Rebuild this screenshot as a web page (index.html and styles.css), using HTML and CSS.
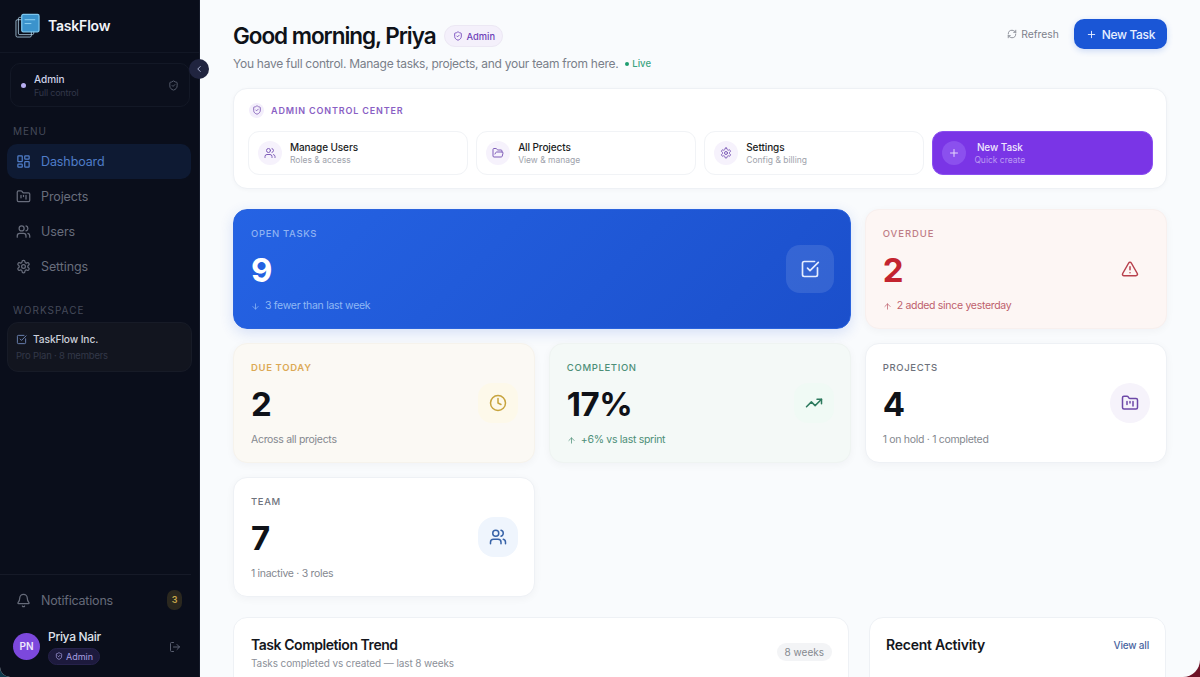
FILE: index.html
```html
<!DOCTYPE html>
<html lang="en">
<head>
  <meta charset="UTF-8" />
  <meta name="viewport" content="width=device-width, initial-scale=1.0"/>
  <title>TaskFlow Dashboard</title>
  <link rel="stylesheet" href="styles.css">
</head>
<body>
  <div class="app">
    <aside class="sidebar">
      <div class="brand">
        <svg class="logo" viewBox="0 0 26 26" fill="none" stroke="#b9dcf2" stroke-width="0.8">
          <rect x="1" y="7" width="16" height="18" rx="1.5"/>
          <rect x="3.5" y="4.5" width="16" height="18" rx="1.5"/>
          <rect x="7" y="1.5" width="18" height="18" rx="1.5" fill="#3b93cc" stroke="#7cc6ee" stroke-width="1.3"/>
          <path d="M10 7h11M10 11h7" stroke="#8fd3f5" stroke-width="1"/>
        </svg>
        <span>TaskFlow</span>
      </div>
      <button class="collapse">
        <svg viewBox="0 0 24 24" fill="none" stroke="#aab2d0" stroke-width="2.4" stroke-linecap="round" stroke-linejoin="round"><path d="m15 18-6-6 6-6"/></svg>
      </button>

      <div class="role-card">
        <i class="role-dot"></i>
        <div class="role-text">
          <strong>Admin</strong>
          <small>Full control</small>
        </div>
        <svg class="ico-sm" viewBox="0 0 24 24" fill="none" stroke="#5b6172" stroke-width="2" stroke-linecap="round" stroke-linejoin="round"><path d="M20 13c0 5-3.5 7.5-7.66 8.95a1 1 0 0 1-.67-.01C7.5 20.5 4 18 4 13V6a1 1 0 0 1 1-1c2 0 4.5-1.2 6.24-2.72a1.17 1.17 0 0 1 1.52 0C14.51 3.81 17 5 19 5a1 1 0 0 1 1 1z"/><path d="m9 12 2 2 4-4"/></svg>
      </div>

      <div class="side-label">MENU</div>
      <nav class="nav">
        <a class="nav-item active">
          <svg viewBox="0 0 24 24" fill="none" stroke="currentColor" stroke-width="2" stroke-linecap="round" stroke-linejoin="round"><rect x="3" y="3" width="7" height="9" rx="1"/><rect x="14" y="3" width="7" height="5" rx="1"/><rect x="14" y="12" width="7" height="9" rx="1"/><rect x="3" y="16" width="7" height="5" rx="1"/></svg>
          Dashboard
        </a>
        <a class="nav-item">
          <svg viewBox="0 0 24 24" fill="none" stroke="currentColor" stroke-width="2" stroke-linecap="round" stroke-linejoin="round"><path d="M20 20a2 2 0 0 0 2-2V8a2 2 0 0 0-2-2h-7.9a2 2 0 0 1-1.69-.9L9.6 3.9A2 2 0 0 0 7.93 3H4a2 2 0 0 0-2 2v13a2 2 0 0 0 2 2Z"/><path d="M8 10v4M12 10v2M16 10v6"/></svg>
          Projects
        </a>
        <a class="nav-item">
          <svg viewBox="0 0 24 24" fill="none" stroke="currentColor" stroke-width="2" stroke-linecap="round" stroke-linejoin="round"><path d="M16 21v-2a4 4 0 0 0-4-4H6a4 4 0 0 0-4 4v2"/><circle cx="9" cy="7" r="4"/><path d="M22 21v-2a4 4 0 0 0-3-3.87"/><path d="M16 3.13a4 4 0 0 1 0 7.75"/></svg>
          Users
        </a>
        <a class="nav-item">
          <svg viewBox="0 0 24 24" fill="none" stroke="currentColor" stroke-width="2" stroke-linecap="round" stroke-linejoin="round"><path d="M12.22 2h-.44a2 2 0 0 0-2 2v.18a2 2 0 0 1-1 1.73l-.43.25a2 2 0 0 1-2 0l-.15-.08a2 2 0 0 0-2.73.73l-.22.38a2 2 0 0 0 .73 2.73l.15.1a2 2 0 0 1 1 1.72v.51a2 2 0 0 1-1 1.74l-.15.09a2 2 0 0 0-.73 2.73l.22.38a2 2 0 0 0 2.73.73l.15-.08a2 2 0 0 1 2 0l.43.25a2 2 0 0 1 1 1.73V20a2 2 0 0 0 2 2h.44a2 2 0 0 0 2-2v-.18a2 2 0 0 1 1-1.73l.43-.25a2 2 0 0 1 2 0l.15.08a2 2 0 0 0 2.73-.73l.22-.39a2 2 0 0 0-.73-2.73l-.15-.08a2 2 0 0 1-1-1.74v-.5a2 2 0 0 1 1-1.74l.15-.09a2 2 0 0 0 .73-2.73l-.22-.38a2 2 0 0 0-2.73-.73l-.15.08a2 2 0 0 1-2 0l-.43-.25a2 2 0 0 1-1-1.73V4a2 2 0 0 0-2-2z"/><circle cx="12" cy="12" r="3"/></svg>
          Settings
        </a>
      </nav>

      <div class="side-label side-label-2">WORKSPACE</div>
      <div class="workspace">
        <div class="workspace-name">
          <svg class="ico-sm" viewBox="0 0 24 24" fill="none" stroke="#6f87b8" stroke-width="2" stroke-linecap="round" stroke-linejoin="round"><path d="M21 10.5V19a2 2 0 0 1-2 2H5a2 2 0 0 1-2-2V5a2 2 0 0 1 2-2h12.5"/><path d="m9 11 3 3L22 4"/></svg>
          TaskFlow Inc.
        </div>
        <small>Pro Plan · 8 members</small>
      </div>

      <div class="side-footer">
        <div class="notif">
          <svg viewBox="0 0 24 24" fill="none" stroke="currentColor" stroke-width="2" stroke-linecap="round" stroke-linejoin="round"><path d="M10.27 21a2 2 0 0 0 3.46 0"/><path d="M3.26 15.33A1 1 0 0 0 4 17h16a1 1 0 0 0 .74-1.67C19.41 13.96 18 12.5 18 8A6 6 0 0 0 6 8c0 4.5-1.41 5.96-2.74 7.33"/></svg>
          <span>Notifications</span>
          <b class="notif-badge">3</b>
        </div>
        <div class="user">
          <div class="avatar">PN</div>
          <div class="user-text">
            <strong>Priya Nair</strong>
            <span class="user-role">
              <svg viewBox="0 0 24 24" fill="none" stroke="currentColor" stroke-width="2.2" stroke-linecap="round" stroke-linejoin="round"><path d="M20 13c0 5-3.5 7.5-7.66 8.95a1 1 0 0 1-.67-.01C7.5 20.5 4 18 4 13V6a1 1 0 0 1 1-1c2 0 4.5-1.2 6.24-2.72a1.17 1.17 0 0 1 1.52 0C14.51 3.81 17 5 19 5a1 1 0 0 1 1 1z"/><path d="m9 12 2 2 4-4"/></svg>
              Admin
            </span>
          </div>
          <svg class="logout" viewBox="0 0 24 24" fill="none" stroke="#5b6172" stroke-width="2" stroke-linecap="round" stroke-linejoin="round"><path d="M9 21H5a2 2 0 0 1-2-2V5a2 2 0 0 1 2-2h4"/><path d="m16 17 5-5-5-5"/><path d="M21 12H9"/></svg>
        </div>
      </div>
    </aside>

    <main class="main">
      <header class="top">
        <div>
          <div class="title-row">
            <h1>Good morning, Priya</h1>
            <span class="admin-pill">
              <svg viewBox="0 0 24 24" fill="none" stroke="currentColor" stroke-width="2" stroke-linecap="round" stroke-linejoin="round"><path d="M20 13c0 5-3.5 7.5-7.66 8.95a1 1 0 0 1-.67-.01C7.5 20.5 4 18 4 13V6a1 1 0 0 1 1-1c2 0 4.5-1.2 6.24-2.72a1.17 1.17 0 0 1 1.52 0C14.51 3.81 17 5 19 5a1 1 0 0 1 1 1z"/><path d="m9 12 2 2 4-4"/></svg>
              Admin
            </span>
          </div>
          <p class="subtitle">You have full control. Manage tasks, projects, and your team from here.<span class="live"><i></i>Live</span></p>
        </div>
        <div class="top-actions">
          <button class="refresh">
            <svg viewBox="0 0 24 24" fill="none" stroke="currentColor" stroke-width="2" stroke-linecap="round" stroke-linejoin="round"><path d="M3 12a9 9 0 0 1 9-9 9.75 9.75 0 0 1 6.74 2.74L21 8"/><path d="M21 3v5h-5"/><path d="M21 12a9 9 0 0 1-9 9 9.75 9.75 0 0 1-6.74-2.74L3 16"/><path d="M8 16H3v5"/></svg>
            Refresh
          </button>
          <button class="new-task">
            <svg viewBox="0 0 24 24" fill="none" stroke="currentColor" stroke-width="2" stroke-linecap="round"><path d="M5 12h14M12 5v14"/></svg>
            New Task
          </button>
        </div>
      </header>

      <section class="control">
        <div class="control-head">
          <span class="control-badge">
            <svg viewBox="0 0 24 24" fill="none" stroke="currentColor" stroke-width="2" stroke-linecap="round" stroke-linejoin="round"><path d="M20 13c0 5-3.5 7.5-7.66 8.95a1 1 0 0 1-.67-.01C7.5 20.5 4 18 4 13V6a1 1 0 0 1 1-1c2 0 4.5-1.2 6.24-2.72a1.17 1.17 0 0 1 1.52 0C14.51 3.81 17 5 19 5a1 1 0 0 1 1 1z"/><path d="m9 12 2 2 4-4"/></svg>
          </span>
          ADMIN CONTROL CENTER
        </div>
        <div class="control-grid">
          <a class="action">
            <span class="action-ico"><svg viewBox="0 0 24 24" fill="none" stroke="currentColor" stroke-width="2" stroke-linecap="round" stroke-linejoin="round"><path d="M16 21v-2a4 4 0 0 0-4-4H6a4 4 0 0 0-4 4v2"/><circle cx="9" cy="7" r="4"/><path d="M22 21v-2a4 4 0 0 0-3-3.87"/><path d="M16 3.13a4 4 0 0 1 0 7.75"/></svg></span>
            <span class="action-text"><b>Manage Users</b><small>Roles &amp; access</small></span>
          </a>
          <a class="action">
            <span class="action-ico"><svg viewBox="0 0 24 24" fill="none" stroke="currentColor" stroke-width="2" stroke-linecap="round" stroke-linejoin="round"><path d="m6 14 1.5-2.9A2 2 0 0 1 9.24 10H20a2 2 0 0 1 1.94 2.5l-1.54 6a2 2 0 0 1-1.95 1.5H4a2 2 0 0 1-2-2V5a2 2 0 0 1 2-2h3.9a2 2 0 0 1 1.69.9l.81 1.2a2 2 0 0 0 1.67.9H18a2 2 0 0 1 2 2v2"/></svg></span>
            <span class="action-text"><b>All Projects</b><small>View &amp; manage</small></span>
          </a>
          <a class="action">
            <span class="action-ico"><svg viewBox="0 0 24 24" fill="none" stroke="currentColor" stroke-width="2" stroke-linecap="round" stroke-linejoin="round"><path d="M12.22 2h-.44a2 2 0 0 0-2 2v.18a2 2 0 0 1-1 1.73l-.43.25a2 2 0 0 1-2 0l-.15-.08a2 2 0 0 0-2.73.73l-.22.38a2 2 0 0 0 .73 2.73l.15.1a2 2 0 0 1 1 1.72v.51a2 2 0 0 1-1 1.74l-.15.09a2 2 0 0 0-.73 2.73l.22.38a2 2 0 0 0 2.73.73l.15-.08a2 2 0 0 1 2 0l.43.25a2 2 0 0 1 1 1.73V20a2 2 0 0 0 2 2h.44a2 2 0 0 0 2-2v-.18a2 2 0 0 1 1-1.73l.43-.25a2 2 0 0 1 2 0l.15.08a2 2 0 0 0 2.73-.73l.22-.39a2 2 0 0 0-.73-2.73l-.15-.08a2 2 0 0 1-1-1.74v-.5a2 2 0 0 1 1-1.74l.15-.09a2 2 0 0 0 .73-2.73l-.22-.38a2 2 0 0 0-2.73-.73l-.15.08a2 2 0 0 1-2 0l-.43-.25a2 2 0 0 1-1-1.73V4a2 2 0 0 0-2-2z"/><circle cx="12" cy="12" r="3"/></svg></span>
            <span class="action-text"><b>Settings</b><small>Config &amp; billing</small></span>
          </a>
          <a class="action action-primary">
            <span class="action-ico"><svg viewBox="0 0 24 24" fill="none" stroke="currentColor" stroke-width="2" stroke-linecap="round"><path d="M5 12h14M12 5v14"/></svg></span>
            <span class="action-text"><b>New Task</b><small>Quick create</small></span>
          </a>
        </div>
      </section>

      <section class="stats">
        <div class="stat stat-blue">
          <div class="stat-body">
            <div class="stat-label">OPEN TASKS</div>
            <div class="stat-num">9</div>
            <div class="stat-sub"><svg viewBox="0 0 24 24" fill="none" stroke="currentColor" stroke-width="2" stroke-linecap="round" stroke-linejoin="round"><path d="M12 5v14M19 12l-7 7-7-7"/></svg>3 fewer than last week</div>
          </div>
          <span class="stat-ico"><svg viewBox="0 0 24 24" fill="none" stroke="currentColor" stroke-width="2" stroke-linecap="round" stroke-linejoin="round"><path d="M21 10.5V19a2 2 0 0 1-2 2H5a2 2 0 0 1-2-2V5a2 2 0 0 1 2-2h12.5"/><path d="m9 11 3 3L22 4"/></svg></span>
        </div>
        <div class="stat stat-red">
          <div class="stat-body">
            <div class="stat-label">OVERDUE</div>
            <div class="stat-num">2</div>
            <div class="stat-sub"><svg viewBox="0 0 24 24" fill="none" stroke="currentColor" stroke-width="2" stroke-linecap="round" stroke-linejoin="round"><path d="M12 19V5M5 12l7-7 7 7"/></svg>2 added since yesterday</div>
          </div>
          <span class="stat-ico"><svg viewBox="0 0 24 24" fill="none" stroke="currentColor" stroke-width="2" stroke-linecap="round" stroke-linejoin="round"><path d="m21.73 18-8-14a2 2 0 0 0-3.48 0l-8 14A2 2 0 0 0 4 21h16a2 2 0 0 0 1.73-3"/><path d="M12 9v4M12 17h.01"/></svg></span>
        </div>
        <div class="stat stat-amber">
          <div class="stat-body">
            <div class="stat-label">DUE TODAY</div>
            <div class="stat-num">2</div>
            <div class="stat-sub">Across all projects</div>
          </div>
          <span class="stat-ico"><svg viewBox="0 0 24 24" fill="none" stroke="currentColor" stroke-width="2" stroke-linecap="round" stroke-linejoin="round"><circle cx="12" cy="12" r="10"/><path d="M12 6v6l4 2"/></svg></span>
        </div>
        <div class="stat stat-green">
          <div class="stat-body">
            <div class="stat-label">COMPLETION</div>
            <div class="stat-num">17%</div>
            <div class="stat-sub"><svg viewBox="0 0 24 24" fill="none" stroke="currentColor" stroke-width="2" stroke-linecap="round" stroke-linejoin="round"><path d="M12 19V5M5 12l7-7 7 7"/></svg>+6% vs last sprint</div>
          </div>
          <span class="stat-ico"><svg viewBox="0 0 24 24" fill="none" stroke="currentColor" stroke-width="2" stroke-linecap="round" stroke-linejoin="round"><path d="M16 7h6v6"/><path d="m22 7-8.5 8.5-5-5L2 17"/></svg></span>
        </div>
        <div class="stat stat-plain">
          <div class="stat-body">
            <div class="stat-label">PROJECTS</div>
            <div class="stat-num">4</div>
            <div class="stat-sub">1 on hold · 1 completed</div>
          </div>
          <span class="stat-ico ico-violet"><svg viewBox="0 0 24 24" fill="none" stroke="currentColor" stroke-width="2" stroke-linecap="round" stroke-linejoin="round"><path d="M20 20a2 2 0 0 0 2-2V8a2 2 0 0 0-2-2h-7.9a2 2 0 0 1-1.69-.9L9.6 3.9A2 2 0 0 0 7.93 3H4a2 2 0 0 0-2 2v13a2 2 0 0 0 2 2Z"/><path d="M8 10v4M12 10v2M16 10v6"/></svg></span>
        </div>
        <div class="stat stat-plain">
          <div class="stat-body">
            <div class="stat-label">TEAM</div>
            <div class="stat-num">7</div>
            <div class="stat-sub">1 inactive · 3 roles</div>
          </div>
          <span class="stat-ico ico-blue"><svg viewBox="0 0 24 24" fill="none" stroke="currentColor" stroke-width="2" stroke-linecap="round" stroke-linejoin="round"><path d="M16 21v-2a4 4 0 0 0-4-4H6a4 4 0 0 0-4 4v2"/><circle cx="9" cy="7" r="4"/><path d="M22 21v-2a4 4 0 0 0-3-3.87"/><path d="M16 3.13a4 4 0 0 1 0 7.75"/></svg></span>
        </div>
      </section>

      <section class="panels">
        <div class="panel">
          <div>
            <h3>Task Completion Trend</h3>
            <p>Tasks completed vs created — last 8 weeks</p>
          </div>
          <span class="weeks">8 weeks</span>
        </div>
        <div class="panel panel-activity">
          <h3>Recent Activity</h3>
          <a class="view-all">View all</a>
        </div>
      </section>
    </main>
  </div>
</body>
</html>
```

FILE: styles.css
```css
* { box-sizing: border-box; }

html, body {
  margin: 0;
  height: 677px;
  overflow: hidden;
}

body {
  font-family: 'Inter', 'Liberation Sans', sans-serif;
  background: linear-gradient(90deg, #0d3a4c 0%, #0d3a4c 50%, #6d1226 50%, #6d1226 100%);
  color: #11141b;
}

svg { display: block; flex-shrink: 0; }

.app {
  display: flex;
  height: 677px;
  position: relative;
  overflow: hidden;
  border-radius: 0 0 17px 10px;
  background: #f9fbfd;
}

/* sidebar */
.sidebar {
  width: 200px;
  flex-shrink: 0;
  display: flex;
  flex-direction: column;
  background: #0a0e1b;
  border-right: 1px solid #161b2a;
  color: #6d7280;
}

.brand {
  height: 53px;
  flex-shrink: 0;
  display: flex;
  align-items: center;
  gap: 8px;
  padding: 0 14px 2px 15px;
  border-bottom: 1px solid #121725;
  color: #f2f4f8;
  font-size: 14px;
  font-weight: 600;
  letter-spacing: -0.2px;
}

.logo { width: 25px; height: 25px; }

.collapse {
  position: absolute;
  left: 189px;
  top: 59px;
  width: 20px;
  height: 20px;
  padding: 5px;
  border: none;
  border-radius: 50%;
  background: #20243f;
}

.collapse svg { width: 10px; height: 10px; }

.ico-sm { width: 11px; height: 11px; }

.role-card {
  display: flex;
  align-items: center;
  margin: 10px 9px 0 10px;
  height: 44px;
  padding: 0 10px;
  border: 1px solid #131826;
  border-radius: 10px;
  background: #0b0f1c;
}

.role-dot {
  width: 5px;
  height: 5px;
  border-radius: 50%;
  background: #b7aef0;
  margin-right: 8px;
}

.role-text { flex: 1; padding-top: 1px; }

.role-text strong {
  display: block;
  font-size: 10px;
  line-height: 13px;
  font-weight: 500;
  color: #cfd3ea;
}

.role-text small {
  display: block;
  font-size: 9px;
  line-height: 13px;
  color: #32374a;
  letter-spacing: -0.2px;
}

.side-label {
  margin: 18px 0 0 13px;
  font-size: 10px;
  line-height: 12px;
  color: #454a5a;
  letter-spacing: 1px;
}

.side-label-2 { margin-top: 20px; }

.nav {
  display: flex;
  flex-direction: column;
  margin-top: 7px;
  padding: 0 8px 0 7px;
}

.nav-item {
  height: 35px;
  display: flex;
  align-items: center;
  gap: 10px;
  padding: 0 9px;
  border-radius: 10px;
  font-size: 12.5px;
  letter-spacing: -0.1px;
  color: #686d7c;
}

.nav-item svg { width: 15px; height: 15px; }

.nav-item.active {
  color: #4f7dc9;
  background: #0e1a33;
}

.workspace {
  margin: 6px 7px 0;
  height: 50px;
  padding: 9px 8px;
  border-radius: 11px;
  background: #12151f;
  border: 1px solid #171b27;
}

.workspace-name {
  display: flex;
  align-items: center;
  gap: 6px;
  font-size: 10.2px;
  font-weight: 500;
  letter-spacing: -0.1px;
  color: #ccd0da;
  line-height: 14px;
}

.workspace small {
  display: block;
  margin-top: 3px;
  font-size: 9.5px;
  line-height: 13px;
  color: #333848;
  letter-spacing: -0.2px;
}

.side-footer {
  margin-top: auto;
  height: 103px;
  border-top: 1px solid #161a28;
  margin-right: 8px;
}

.notif {
  display: flex;
  align-items: center;
  gap: 10px;
  padding: 14px 9px 0 16px;
  height: 36px;
  font-size: 12.5px;
  letter-spacing: -0.2px;
  color: #666b7a;
}

.notif svg { width: 15px; height: 15px; }

.notif span { flex: 1; }

.notif-badge {
  width: 15px;
  height: 20px;
  line-height: 20px;
  text-align: center;
  border-radius: 7px;
  background: #2b281f;
  color: #c9a94a;
  font-size: 9px;
  font-weight: 600;
}

.user {
  display: flex;
  align-items: center;
  padding: 0 10px 0 13px;
  margin-top: 18px;
}

.avatar {
  width: 27px;
  height: 27px;
  border-radius: 50%;
  background: #7c48dc;
  color: #efe9fd;
  font-size: 10px;
  font-weight: 600;
  text-align: center;
  line-height: 27px;
  margin-right: 8px;
}

.user-text { flex: 1; }

.user-text strong {
  display: block;
  font-size: 12px;
  line-height: 15px;
  font-weight: 500;
  letter-spacing: -0.3px;
  color: #dfe2ea;
}

.user-role {
  display: inline-flex;
  align-items: center;
  gap: 3px;
  margin-top: 1px;
  height: 17px;
  padding: 0 6px;
  border-radius: 9px;
  background: #1d1a3d;
  border: 1px solid #26224b;
  font-size: 9px;
  color: #a79fe0;
}

.user-role svg { width: 8px; height: 8px; }

.logout { width: 12px; height: 12px; }

/* main */
.main {
  flex: 1;
  min-width: 0;
  padding: 19px 33.5px 0 33px;
  overflow: hidden;
}

.top {
  display: flex;
  justify-content: space-between;
  align-items: flex-start;
  height: 69px;
}

.title-row {
  display: flex;
  align-items: center;
  gap: 8px;
  margin-top: 4px;
}

h1 {
  margin: 0;
  font-size: 22.5px;
  line-height: 26px;
  font-weight: 600;
  letter-spacing: -1.05px;
  color: #0f1218;
}

.admin-pill {
  display: inline-flex;
  align-items: center;
  gap: 4px;
  height: 22px;
  padding: 0 7px 0 8px;
  border-radius: 11px;
  background: #f4f0fb;
  border: 1px solid #ece8f4;
  color: #6d3fb8;
  font-size: 9.3px;
  font-weight: 500;
}

.admin-pill svg { width: 10px; height: 10px; }

.subtitle {
  display: flex;
  align-items: center;
  margin: 7px 0 0;
  font-size: 12px;
  line-height: 16px;
  color: #7a7f8a;
  letter-spacing: -0.27px;
}

.live {
  display: inline-flex;
  align-items: center;
  gap: 3px;
  margin-left: 7px;
  font-size: 9.5px;
  font-weight: 500;
  letter-spacing: 0;
  color: #3aa37f;
}

.live i {
  width: 4px;
  height: 4px;
  border-radius: 50%;
  background: #1f9d70;
}

.top-actions {
  display: flex;
  align-items: center;
  gap: 15px;
  margin-right: -0.5px;
}

.refresh {
  display: flex;
  align-items: center;
  gap: 4px;
  padding: 0;
  border: none;
  background: none;
  font: inherit;
  font-size: 10.3px;
  color: #7d818b;
}

.refresh svg { width: 10px; height: 10px; }

.new-task {
  display: flex;
  align-items: center;
  gap: 5px;
  height: 30px;
  padding: 0 12px 0 12px;
  border: none;
  border-radius: 10px;
  background: #1a56d6;
  color: #e6eeff;
  font: inherit;
  font-size: 12px;
  font-weight: 500;
  letter-spacing: -0.35px;
  box-shadow: 0 2px 6px rgba(26, 86, 214, 0.2);
}

.new-task svg { width: 11px; height: 11px; }

.control {
  height: 101px;
  padding: 13px 13px 0 14px;
  border: 1px solid #eef1f5;
  border-radius: 14px;
  background: #fff;
  box-shadow: 0 1px 4px rgba(20, 30, 60, 0.03);
}

.control-head {
  display: flex;
  align-items: center;
  gap: 7px;
  height: 16px;
  padding-left: 1px;
  font-size: 9px;
  font-weight: 600;
  letter-spacing: 0.85px;
  color: #8a5fc4;
}

.control-badge {
  width: 15px;
  height: 15px;
  padding: 2.5px;
  border-radius: 50%;
  background: #f3eefb;
  color: #7d58b4;
}

.control-badge svg { width: 10px; height: 10px; }

.control-grid {
  display: grid;
  grid-template-columns: repeat(4, 1fr);
  gap: 8px;
  margin-top: 13px;
}

.action {
  height: 44px;
  display: flex;
  align-items: center;
  gap: 8px;
  padding: 0 9px;
  border: 1px solid #f1f3f6;
  border-radius: 11px;
  background: #fff;
}

.action-ico {
  width: 24px;
  height: 24px;
  padding: 6px;
  border-radius: 50%;
  background: #f6f2fc;
  color: #7e5cb8;
}

.action-ico svg { width: 12px; height: 12px; }

.action-text b {
  display: block;
  font-size: 10px;
  line-height: 13px;
  font-weight: 500;
  letter-spacing: -0.1px;
  color: #1a1c22;
}

.action-text small {
  display: block;
  font-size: 8.5px;
  line-height: 12px;
  color: #9ea2ab;
}

.action-primary {
  background: #7a35e6;
  border-color: #8a4ff0;
}

.action-primary .action-ico {
  background: #8b50ee;
  color: #e5d8fb;
}

.action-primary .action-text { text-align: center; }

.action-primary .action-text b { color: #efe6fd; }

.action-primary .action-text small { color: #bb9af3; }

.stats {
  display: grid;
  grid-template-columns: repeat(3, 1fr);
  grid-auto-rows: 120px;
  gap: 14px;
  margin-top: 20px;
}

.stat {
  display: flex;
  align-items: center;
  justify-content: space-between;
  padding: 0 16px 0 17px;
  border: 1px solid #eef1f5;
  border-radius: 14px;
  background: #fff;
  box-shadow: 0 2px 8px rgba(20, 30, 60, 0.04);
}

.stat-body { padding-top: 3px; }

.stat-label {
  font-size: 9.5px;
  line-height: 12px;
  font-weight: 500;
  letter-spacing: 0.65px;
  color: #6e727c;
}

.stat-num {
  margin-top: 10px;
  font-size: 33px;
  line-height: 40px;
  font-weight: 700;
  letter-spacing: -0.5px;
  color: #0f1218;
}

.stat-sub {
  display: flex;
  align-items: center;
  gap: 5px;
  margin-top: 9px;
  font-size: 10.5px;
  line-height: 14px;
  letter-spacing: -0.3px;
  color: #84888f;
}

.stat-sub svg { width: 9px; height: 9px; }

.stat-ico {
  width: 40px;
  height: 40px;
  padding: 11px;
  border-radius: 14px;
}

.stat-ico svg { width: 18px; height: 18px; }

.stat-blue {
  grid-column: span 2;
  border-color: #2a63dd;
  background: linear-gradient(135deg, #2563e4, #1b4fcb);
  box-shadow: 0 4px 14px rgba(30, 80, 210, 0.16);
}

.stat-blue .stat-label { color: #8fb3f2; }
.stat-blue .stat-num { color: #fff; }
.stat-blue .stat-sub { color: #8fb8f5; }

.stat-blue .stat-ico {
  width: 48px;
  height: 48px;
  padding: 14px;
  background: rgba(255, 255, 255, 0.11);
  color: #e4edff;
}

.stat-blue .stat-ico svg { width: 20px; height: 20px; }

.stat-red { background: #fdf6f4; border-color: #f8f0ee; }
.stat-red .stat-label { color: #bf7d86; letter-spacing: 0.95px; }
.stat-red .stat-num { color: #c3242f; }
.stat-red .stat-sub { color: #bd5f6c; }
.stat-red .stat-ico { color: #b8404c; }

.stat-amber { background: #fbf9f4; border-color: #f6f3ec; }
.stat-amber .stat-label { color: #dca955; font-weight: 600; }
.stat-amber .stat-ico { color: #c7a43e; background: #fdf9ea; }

.stat-green { background: #f4f9f7; border-color: #eff4f2; }
.stat-green .stat-label { color: #4d8f78; }
.stat-green .stat-sub { color: #4d8f78; }
.stat-green .stat-ico { color: #2d7a5e; background: #f0faf5; }

.ico-violet { color: #6d48a8; background: #f6f3fb; border-radius: 50%; }
.ico-blue { color: #3763a8; background: #eff5fd; border-radius: 16px; }

.panels {
  display: grid;
  grid-template-columns: 616px 297px;
  gap: 20px;
  margin-top: 20px;
}

.panel {
  display: flex;
  justify-content: space-between;
  height: 90px;
  padding: 18px 17px 0;
  border: 1px solid #eef1f5;
  border-radius: 14px;
  background: #fff;
}

.panel-activity { padding: 18px 16px 0; }

.panel h3 {
  margin: 0;
  font-size: 14px;
  line-height: 18px;
  font-weight: 600;
  letter-spacing: -0.45px;
  color: #14161c;
}

.panel-activity h3 { letter-spacing: -0.25px; }

.panel p {
  margin: 2px 0 0;
  font-size: 10px;
  line-height: 14px;
  letter-spacing: -0.1px;
  color: #8b8f98;
}

.weeks {
  height: 18px;
  margin: 7px -1px 0 0;
  padding: 0 8px;
  border-radius: 9px;
  background: #f3f4f6;
  font-size: 10px;
  line-height: 18px;
  color: #85898f;
}

.view-all {
  font-size: 10px;
  line-height: 18px;
  font-weight: 500;
  letter-spacing: -0.2px;
  color: #4b669f;
}
```
